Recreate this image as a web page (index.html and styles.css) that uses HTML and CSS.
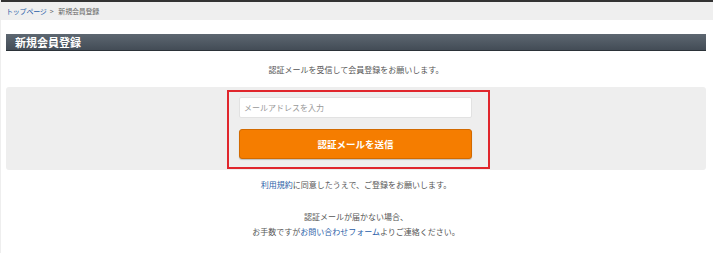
FILE: index.html
```html
<!DOCTYPE html>
<html lang="ja">
<head>
    <meta charset="UTF-8">
    <title>新規会員登録</title>
    <link rel="stylesheet" href="styles.css">
</head>
<body>
    <!-- Breadcrumb -->
    <div class="breadcrumb">
        <a href="#">トップページ</a><span class="sep">&gt;</span><span>新規会員登録</span>
    </div>

    <div class="page">
        <h1 class="page-title">新規会員登録</h1>

        <p class="lead">認証メールを受信して会員登録をお願いします。</p>

        <div class="form-box">
            <form class="mail-form">
                <input type="text" class="mail-input" placeholder="メールアドレスを入力">
                <button type="button" class="send-btn">認証メールを送信</button>
            </form>
        </div>

        <p class="agree"><a href="#">利用規約</a>に同意したうえで、ご登録をお願いします。</p>

        <p class="notice">
            認証メールが届かない場合、<br>
            お手数ですが<a href="#">お問い合わせフォーム</a>よりご連絡ください。
        </p>
    </div>
</body>
</html>
```

FILE: styles.css
```css
/* General */
body {
    margin: 0;
    min-height: 253px;
    font-family: "Noto Sans CJK JP", "Noto Sans", sans-serif;
    color: #555;
    background: #fff;
    border-left: 1px solid #eee;
}

a {
    color: #2a5ea8;
    text-decoration: none;
}

/* Breadcrumb */
.breadcrumb {
    height: 18px;
    line-height: 18px;
    padding: 0 5px;
    font-size: 7px;
    letter-spacing: -0.2px;
    color: #666;
    background: #efefef;
    border-top: 2px solid #333;
}

.breadcrumb a {
    color: #2a5ea8;
}

.breadcrumb .sep {
    margin: 0 5px 0 3px;
}

/* Main */
.page {
    padding: 14px 7px 0 5px;
}

.page-title {
    margin: 0;
    height: 16px;
    line-height: 16px;
    padding: 0 9px;
    font-size: 11px;
    font-weight: bold;
    color: #fff;
    background: linear-gradient(#5d6771, #434c56);
    border-bottom: 1px solid #2b3238;
}

.lead {
    margin: 13px 0 0;
    font-size: 8px;
    line-height: 12px;
    text-align: center;
}

/* Form box */
.form-box {
    display: flex;
    justify-content: center;
    margin-top: 11px;
    padding: 3px 0 1px;
    background: #eeeeee;
    border-radius: 3px;
}

.mail-form {
    display: flex;
    flex-direction: column;
    gap: 11px;
    width: 233px;
    padding: 5px 16px 8px 10px;
    border: 2px solid #e0262c;
    margin-left: 5px;
}

.mail-input {
    box-sizing: border-box;
    height: 21px;
    padding: 0 4px;
    font-family: inherit;
    font-size: 8px;
    border: 1px solid #e2e2e2;
    border-radius: 2px;
    background: #fff;
    outline: none;
}

.mail-input::placeholder {
    color: #999;
}

.send-btn {
    height: 30px;
    font-family: inherit;
    font-size: 9.5px;
    font-weight: bold;
    color: #fff;
    background: #f57d00;
    border: 1px solid #d26a00;
    border-radius: 3px;
    box-shadow: 0 1px 1px rgba(0, 0, 0, 0.2);
    cursor: pointer;
}

.agree {
    margin: 9px 0 0;
    font-size: 8px;
    line-height: 12px;
    text-align: center;
}

.notice {
    margin: 18px 0 0;
    font-size: 8px;
    line-height: 15px;
    text-align: center;
}
```
